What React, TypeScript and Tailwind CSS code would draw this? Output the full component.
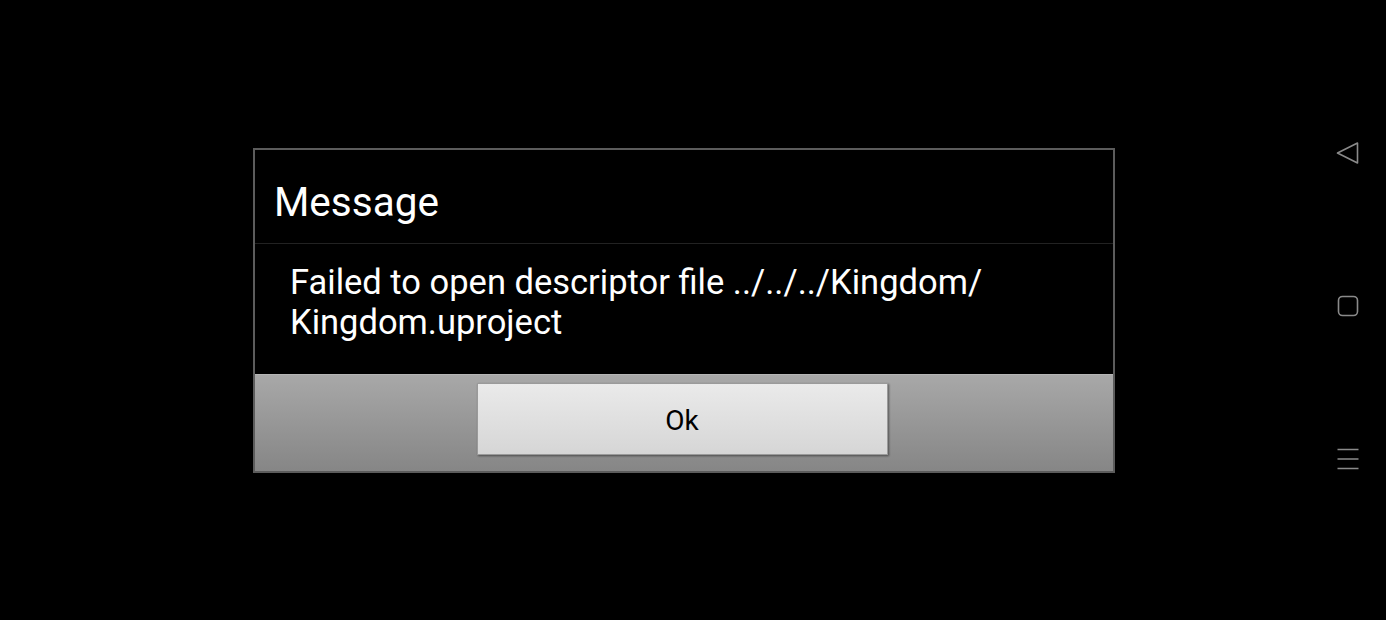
import React from "react";

export default function App() {
  return (
    <div
      className="w-[1386px] h-[620px] bg-black flex overflow-hidden"
      style={{ fontFamily: "Roboto, 'Noto Sans', sans-serif" }}
    >
      <div className="flex-1 pl-[253px] pt-[148px]">
        <div className="w-[862px] h-[325px] border-2 border-[#5c5c5c] flex flex-col bg-black">
          <div className="h-[94px] border-b border-[#222] flex items-center pl-[19px] pt-[12px]">
            <span className="text-white text-[40.5px] leading-none">Message</span>
          </div>
          <div className="flex-1 pl-[35px] pt-[18px] pr-[60px]">
            <p className="text-white text-[34.5px] leading-[40px]">
              Failed to open descriptor file ../../../Kingdom/
              <br />
              Kingdom.uproject
            </p>
          </div>
          <div className="h-[97px] bg-gradient-to-b from-[#a8a8a8] to-[#868686] border-t border-[#b5b5b5] flex justify-center pt-[8px] pr-[4px]">
            <button className="w-[411px] h-[72px] pt-[4px] bg-gradient-to-b from-[#eaeaea] to-[#d6d6d6] border border-[#9a9a9a] shadow-[1px_1px_2px_rgba(0,0,0,0.45)] text-black text-[28px]">
              Ok
            </button>
          </div>
        </div>
      </div>
      <div className="w-[78px] flex flex-col items-center pl-[2px]">
        <div className="mt-[141px]">
          <svg width="24" height="24" viewBox="0 0 24 24" fill="none" stroke="#8a8a8a" strokeWidth="1.6" strokeLinejoin="round">
            <path d="M21.5 2 L21.5 22 L1.5 12 Z" />
          </svg>
        </div>
        <div className="mt-[129px]">
          <svg width="24" height="24" viewBox="0 0 24 24" fill="none" stroke="#8a8a8a" strokeWidth="1.6">
            <rect x="2.5" y="2.5" width="19" height="19" rx="4" />
          </svg>
        </div>
        <div className="mt-[129px]">
          <svg width="24" height="24" viewBox="0 0 24 24" fill="none" stroke="#8a8a8a" strokeWidth="1.6">
            <path d="M1.5 2.5 H22.5 M1.5 12 H22.5 M1.5 21.5 H22.5" />
          </svg>
        </div>
      </div>
    </div>
  );
}
